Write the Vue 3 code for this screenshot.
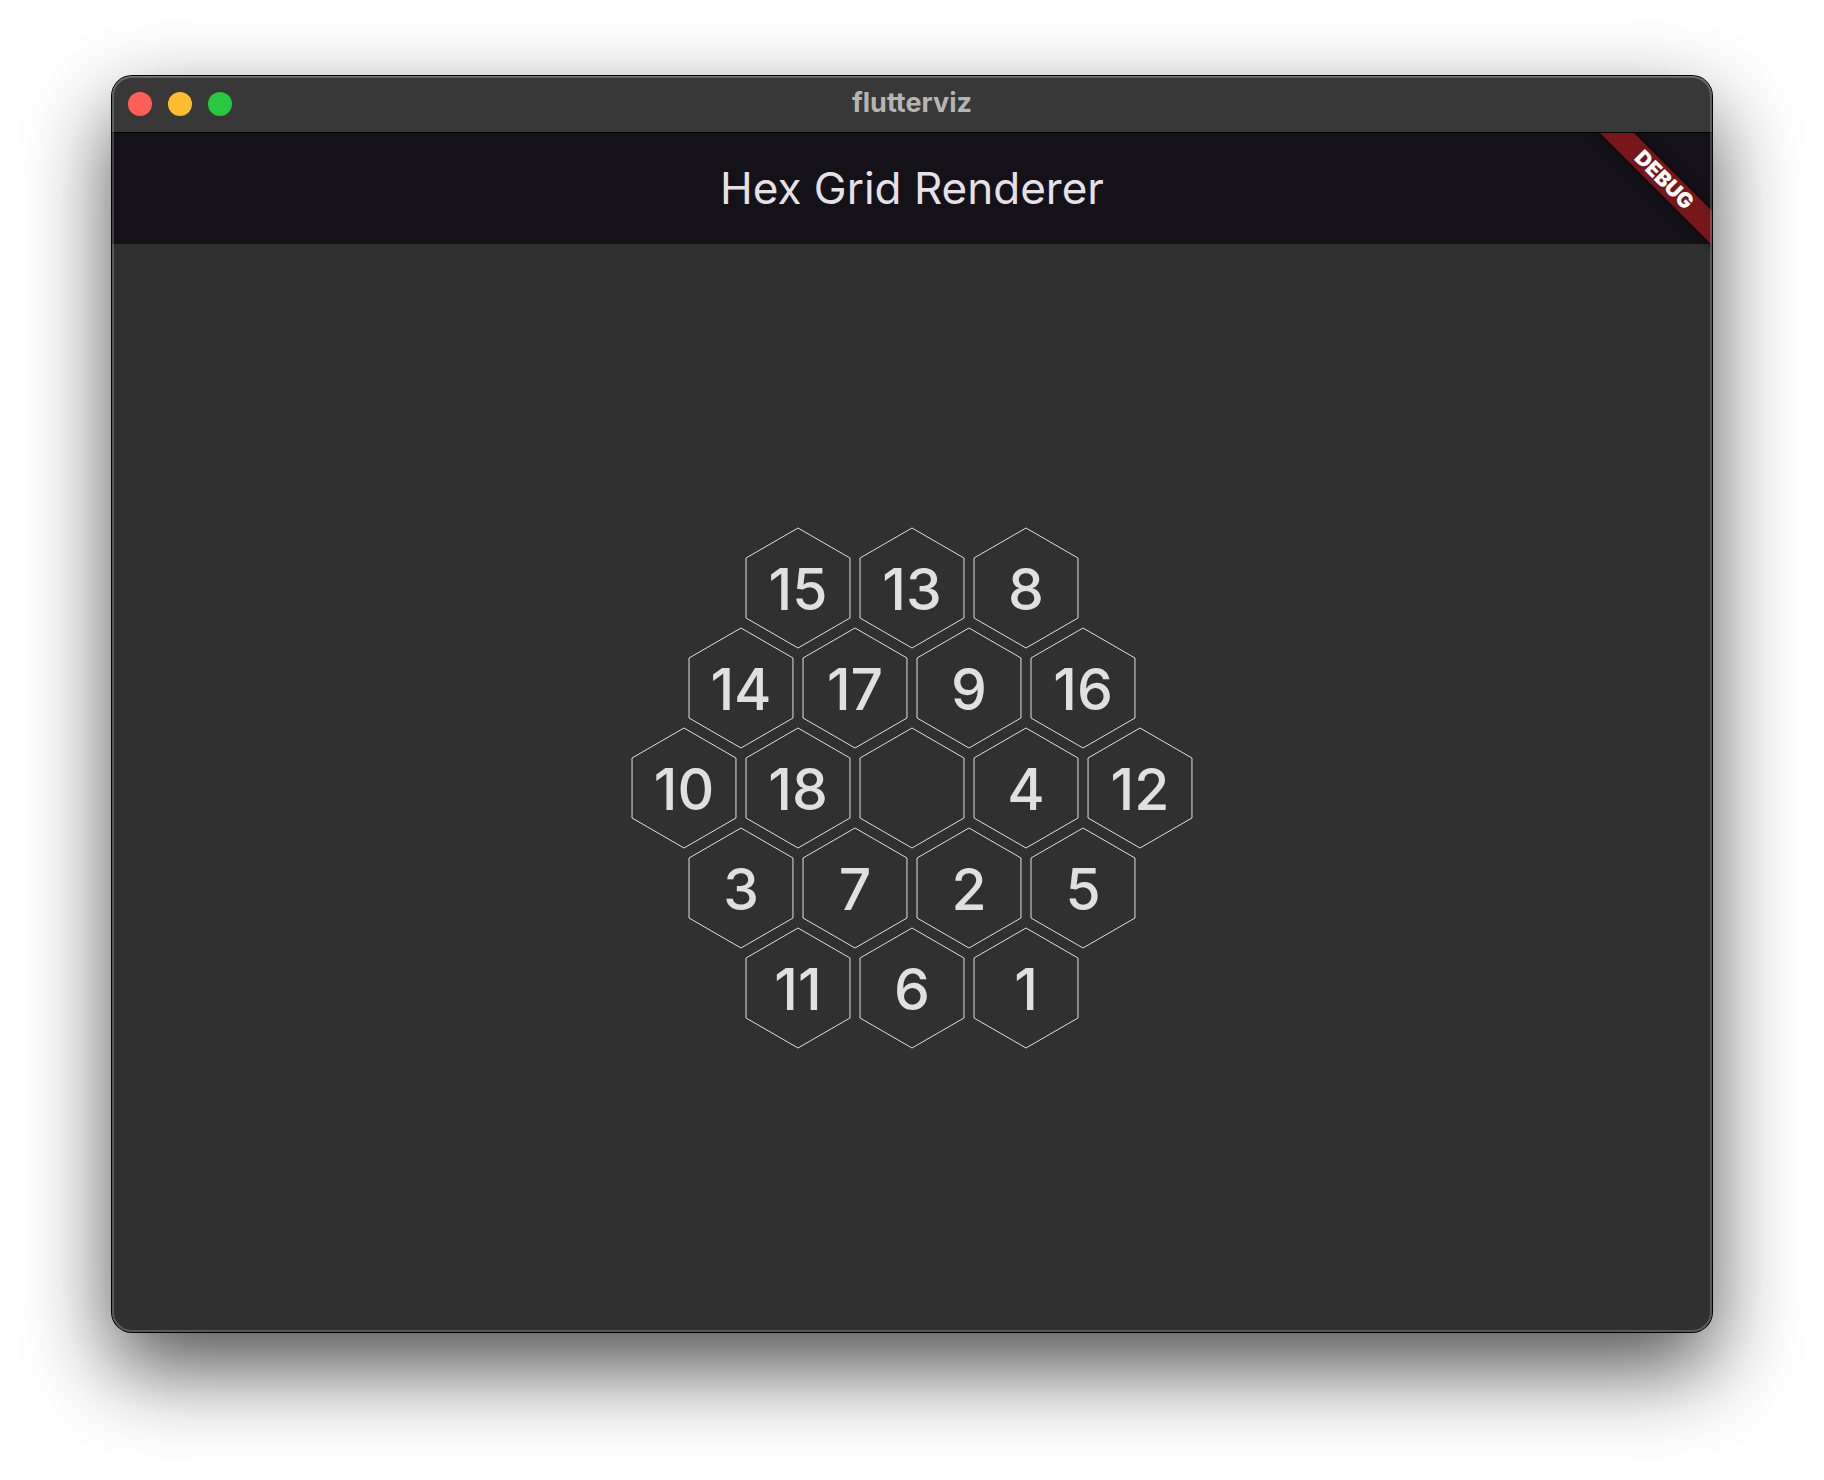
<script setup>
const controls = [
  { name: 'Close', kind: 'close' },
  { name: 'Minimize', kind: 'minimize' },
  { name: 'Zoom', kind: 'zoom' },
]

// null marks the empty cell in the centre
const rows = [
  [15, 13, 8],
  [14, 17, 9, 16],
  [10, 18, null, 4, 12],
  [3, 7, 2, 5],
  [11, 6, 1],
]
</script>

<template>
  <div class="desktop">
    <div class="window">
      <header class="titlebar">
        <div class="controls">
          <button
            v-for="c in controls"
            :key="c.kind"
            type="button"
            class="control"
            :class="c.kind"
            :aria-label="c.name"
          ></button>
        </div>
        <span class="window-title">flutterviz</span>
      </header>

      <div class="app">
        <div class="appbar">
          <h1 class="app-title">Hex Grid Renderer</h1>
        </div>
        <main class="body">
          <div class="hex-grid">
            <div v-for="(row, r) in rows" :key="r" class="hex-row">
              <div v-for="(value, i) in row" :key="i" class="hex">
                <svg class="outline" viewBox="0 0 104 120" aria-hidden="true">
                  <polygon points="52,0 103.96,30 103.96,90 52,120 0.04,90 0.04,30" />
                </svg>
                <span class="value">{{ value }}</span>
              </div>
            </div>
          </div>
        </main>
        <div class="banner-corner">
          <div class="banner">DEBUG</div>
        </div>
      </div>
    </div>
  </div>
</template>

<style>
body {
  margin: 0;
  background: #fff;
}
</style>

<style scoped>
.desktop {
  box-sizing: border-box;
  display: flex;
  min-height: 100vh;
  padding: 76px 112px 148px;
  overflow: hidden;
  font-family: Inter, "Liberation Sans", sans-serif;
}

.window {
  position: relative;
  display: flex;
  flex: 1;
  flex-direction: column;
  border-radius: 20px;
  background: #303030;
  box-shadow:
    0 0 0 1px #000,
    0 36px 86px rgba(0, 0, 0, 0.69);
}

/* light rim drawn over the window contents */
.window::after {
  content: "";
  position: absolute;
  inset: 0;
  border-radius: 20px;
  box-shadow:
    inset 0 0 0 2px rgba(255, 255, 255, 0.2),
    inset 0 1px 0 rgba(255, 255, 255, 0.16);
  pointer-events: none;
}

.titlebar {
  display: grid;
  grid-template-columns: 1fr auto 1fr;
  align-items: center;
  box-sizing: border-box;
  height: 57px;
  padding: 0 16px;
  border-bottom: 1px solid #000;
  border-radius: 20px 20px 0 0;
  background: #383838;
}

.controls {
  display: flex;
  gap: 16px;
}

.control {
  width: 24px;
  height: 24px;
  padding: 0;
  border: 0;
  border-radius: 50%;
}

.close {
  background: #ff5f57;
}

.minimize {
  background: #febc2e;
}

.zoom {
  background: #28c840;
}

.window-title {
  padding-bottom: 2px;
  color: #b4b4b4;
  font-size: 27px;
  font-weight: 700;
  line-height: 54px;
}

.app {
  position: relative;
  display: flex;
  flex: 1;
  flex-direction: column;
  overflow: hidden;
  border-radius: 0 0 20px 20px;
}

.appbar {
  display: flex;
  align-items: center;
  justify-content: center;
  height: 111px;
  background: #141218;
}

.app-title {
  margin: 0;
  padding-bottom: 2px;
  color: #e6e0e9;
  font-size: 44px;
  font-weight: 400;
  line-height: 56px;
}

.body {
  display: flex;
  flex: 1;
  align-items: center;
  justify-content: center;
  background: #303030;
}

.hex-grid {
  display: flex;
  flex-direction: column;
}

.hex-row {
  display: flex;
  justify-content: center;
  gap: 10px;
}

.hex-row + .hex-row {
  margin-top: -20px;
}

.hex {
  display: grid;
  width: 104px;
  height: 120px;
  place-items: center;
}

.outline,
.value {
  grid-area: 1 / 1;
}

.outline {
  width: 104px;
  height: 120px;
  overflow: visible;
  fill: none;
  stroke: #e0e0e0;
  stroke-width: 1;
}

.value {
  padding-top: 4px;
  color: #e0e0e0;
  font-size: 57px;
  font-weight: 500;
  line-height: 64px;
}

.banner-corner {
  position: absolute;
  top: 0;
  right: 0;
  width: 160px;
  height: 160px;
  overflow: hidden;
}

.banner {
  position: absolute;
  top: 35px;
  right: -52px;
  width: 200px;
  height: 24px;
  background: #761619;
  box-shadow: 0 0 12px rgba(0, 0, 0, 0.5);
  color: #fff;
  font-size: 21px;
  font-weight: 900;
  line-height: 24px;
  text-align: center;
  transform: rotate(45deg);
}
</style>
